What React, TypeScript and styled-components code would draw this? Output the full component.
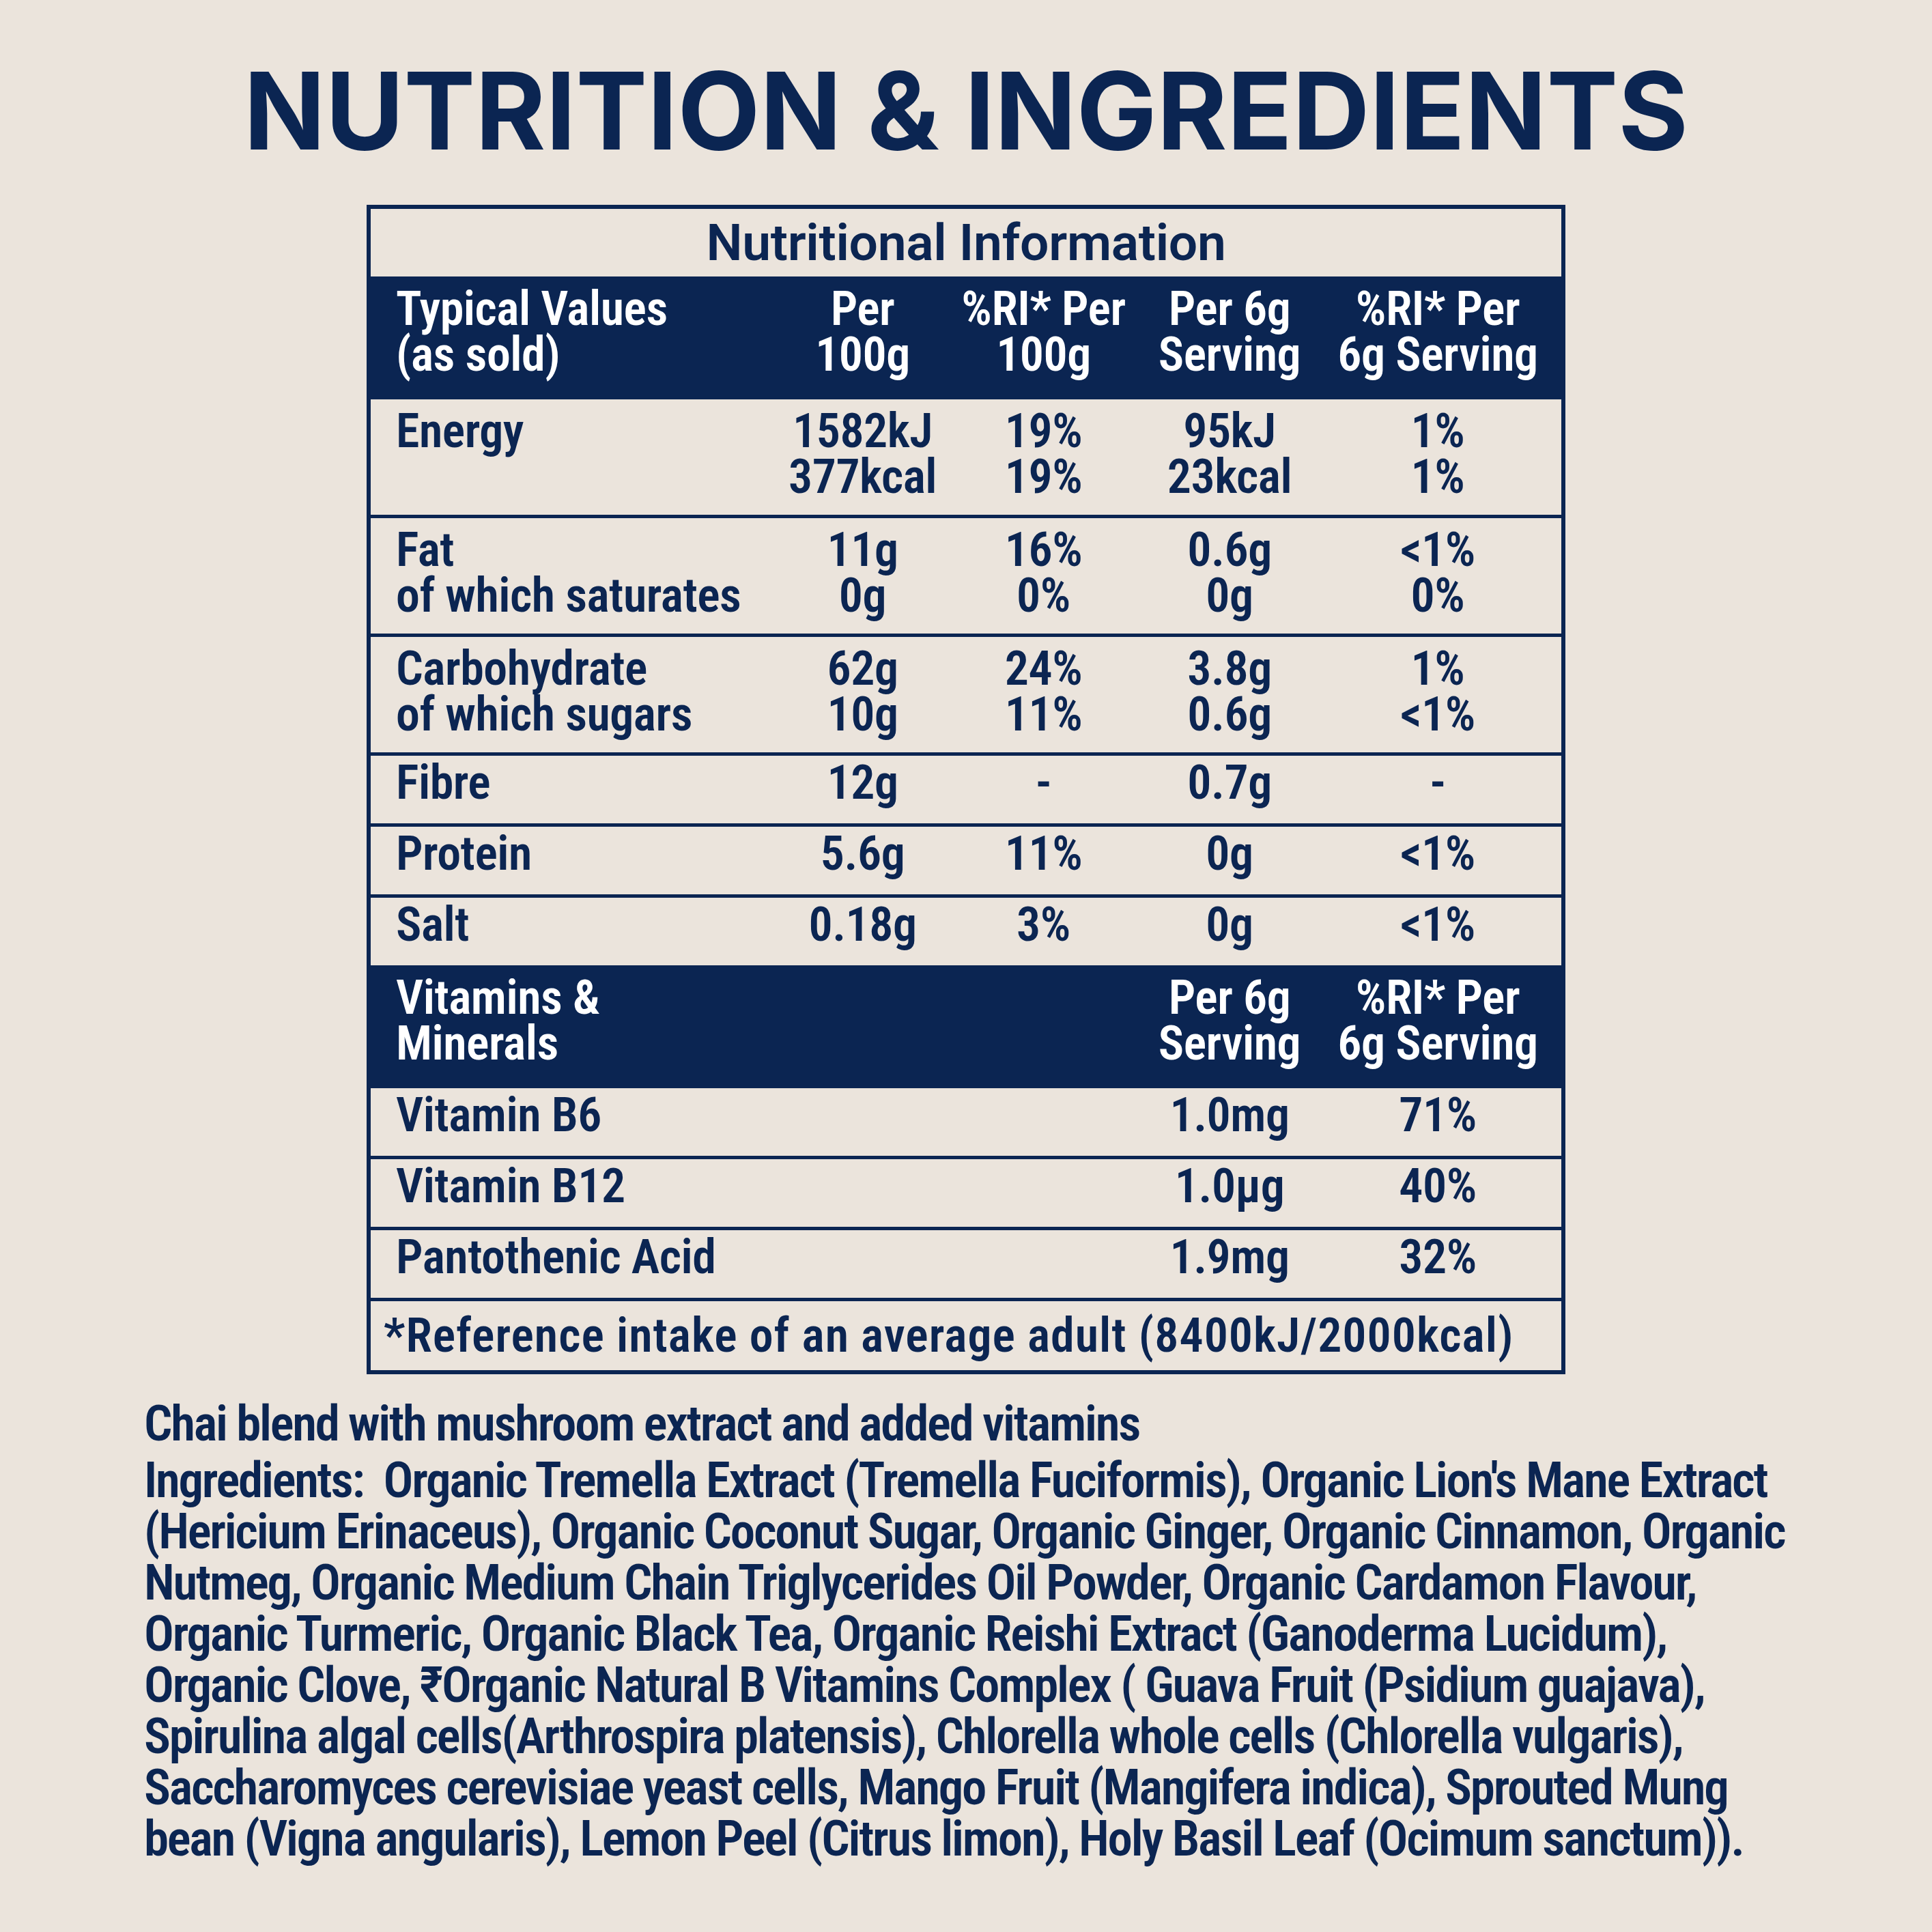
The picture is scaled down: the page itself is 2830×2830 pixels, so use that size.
import React from "react";
import styled, { createGlobalStyle } from "styled-components";

const NAVY = "#0b2552";
const CREAM = "#ebe4dc";

const GlobalStyle = createGlobalStyle`
  html, body {
    margin: 0;
    padding: 0;
    background: ${CREAM};
  }
  body {
    font-family: Roboto, "Noto Sans", "Liberation Sans", sans-serif;
    color: ${NAVY};
  }
  * { box-sizing: border-box; }
`;

const Page = styled.div`
  width: 2830px;
  height: 2830px;
  background: ${CREAM};
  padding-top: 84px;
  display: flex;
  flex-direction: column;
  align-items: stretch;
`;

const Title = styled.h1`
  margin: 0;
  font-family: Inter, Roboto, sans-serif;
  font-size: 157px;
  line-height: 157px;
  font-weight: 700;
  text-align: center;
  color: ${NAVY};
`;

const Table = styled.div`
  width: 1756px;
  margin: 59px auto 0;
  border: 6px solid ${NAVY};
  display: flex;
  flex-direction: column;
`;

const TableTitle = styled.div`
  height: 99px;
  line-height: 99px;
  text-align: center;
  font-size: 75px;
  font-weight: 600;
  letter-spacing: -0.3px;
`;

type Kind = "head" | "single" | "double";

const pads: Record<Kind, string> = {
  head: "14px 16px 32px 0",
  double: "13px 16px 22px 0",
  single: "6px 16px 26px 0",
};

const Row = styled.div<{ $kind: Kind; $rule?: boolean }>`
  display: grid;
  grid-template-columns: 588px 265px 265px 280px 330px;
  padding: ${(p) => pads[p.$kind]};
  background: ${(p) => (p.$kind === "head" ? NAVY : "transparent")};
  color: ${(p) => (p.$kind === "head" ? "#ffffff" : NAVY)};
  border-top: ${(p) => (p.$rule ? `5px solid ${NAVY}` : "none")};
  font-size: 70px;
  line-height: 67px;
  font-weight: 600;
  font-stretch: 75%;
  letter-spacing: -0.5px;
`;

const Label = styled.div`
  padding-left: 37px;
  white-space: nowrap;
`;

const Cell = styled.div`
  text-align: center;
  white-space: nowrap;
`;

const Footnote = styled.div`
  border-top: 5px solid ${NAVY};
  padding: 17px 0 17px 19px;
  font-size: 70px;
  line-height: 67px;
  font-weight: 600;
  font-stretch: 75%;
  letter-spacing: 1px;
  white-space: nowrap;
`;

const Ingredients = styled.div`
  margin-top: 35px;
  padding-left: 211px;
  font-size: 73px;
  line-height: 75px;
  font-weight: 600;
  font-stretch: 75%;
  letter-spacing: -2.3px;
  color: ${NAVY};
`;

const Lead = styled.p`
  margin: 0 0 8px;
  white-space: nowrap;
`;

const Line = styled.div`
  white-space: pre;
`;

type R = { label: string[]; cols: string[][] };

const nutrition: R[] = [
  { label: ["Energy"], cols: [["1582kJ", "377kcal"], ["19%", "19%"], ["95kJ", "23kcal"], ["1%", "1%"]] },
  { label: ["Fat", "of which saturates"], cols: [["11g", "0g"], ["16%", "0%"], ["0.6g", "0g"], ["<1%", "0%"]] },
  { label: ["Carbohydrate", "of which sugars"], cols: [["62g", "10g"], ["24%", "11%"], ["3.8g", "0.6g"], ["1%", "<1%"]] },
  { label: ["Fibre"], cols: [["12g"], ["-"], ["0.7g"], ["-"]] },
  { label: ["Protein"], cols: [["5.6g"], ["11%"], ["0g"], ["<1%"]] },
  { label: ["Salt"], cols: [["0.18g"], ["3%"], ["0g"], ["<1%"]] },
];

const vitamins: R[] = [
  { label: ["Vitamin B6"], cols: [[""], [""], ["1.0mg"], ["71%"]] },
  { label: ["Vitamin B12"], cols: [[""], [""], ["1.0µg"], ["40%"]] },
  { label: ["Pantothenic Acid"], cols: [[""], [""], ["1.9mg"], ["32%"]] },
];

const ingredientLines = [
  "Ingredients:  Organic Tremella Extract (Tremella Fuciformis), Organic Lion's Mane Extract",
  "(Hericium Erinaceus), Organic Coconut Sugar, Organic Ginger, Organic Cinnamon, Organic",
  "Nutmeg, Organic Medium Chain Triglycerides Oil Powder, Organic Cardamon Flavour,",
  "Organic Turmeric, Organic Black Tea, Organic Reishi Extract (Ganoderma Lucidum),",
  "Organic Clove, ₹Organic Natural B Vitamins Complex ( Guava Fruit (Psidium guajava),",
  "Spirulina algal cells(Arthrospira platensis), Chlorella whole cells (Chlorella vulgaris),",
  "Saccharomyces cerevisiae yeast cells, Mango Fruit (Mangifera indica), Sprouted Mung",
  "bean (Vigna angularis), Lemon Peel (Citrus limon), Holy Basil Leaf (Ocimum sanctum)).",
];

const Lines: React.FC<{ items: string[] }> = ({ items }) => (
  <>
    {items.map((t, i) => (
      <React.Fragment key={i}>
        {t}
        {i < items.length - 1 && <br />}
      </React.Fragment>
    ))}
  </>
);

const DataRow: React.FC<{ r: R; rule: boolean }> = ({ r, rule }) => (
  <Row $kind={r.label.length > 1 || r.cols[0].length > 1 ? "double" : "single"} $rule={rule}>
    <Label>
      <Lines items={r.label} />
    </Label>
    {r.cols.map((c, i) => (
      <Cell key={i}>
        <Lines items={c} />
      </Cell>
    ))}
  </Row>
);

export default function App() {
  return (
    <>
      <GlobalStyle />
      <Page>
        <Title>NUTRITION &amp; INGREDIENTS</Title>
        <Table>
          <TableTitle>Nutritional Information</TableTitle>
          <Row $kind="head">
            <Label>
              Typical Values
              <br />
              (as sold)
            </Label>
            <Cell>
              Per
              <br />
              100g
            </Cell>
            <Cell>
              %RI* Per
              <br />
              100g
            </Cell>
            <Cell>
              Per 6g
              <br />
              Serving
            </Cell>
            <Cell>
              %RI* Per
              <br />
              6g Serving
            </Cell>
          </Row>
          {nutrition.map((r, i) => (
            <DataRow key={r.label[0]} r={r} rule={i > 0} />
          ))}
          <Row $kind="head">
            <Label>
              Vitamins &amp;
              <br />
              Minerals
            </Label>
            <Cell />
            <Cell />
            <Cell>
              Per 6g
              <br />
              Serving
            </Cell>
            <Cell>
              %RI* Per
              <br />
              6g Serving
            </Cell>
          </Row>
          {vitamins.map((r, i) => (
            <DataRow key={r.label[0]} r={r} rule={i > 0} />
          ))}
          <Footnote>*Reference intake of an average adult (8400kJ/2000kcal)</Footnote>
        </Table>
        <Ingredients>
          <Lead>Chai blend with mushroom extract and added vitamins</Lead>
          {ingredientLines.map((l) => (
            <Line key={l}>{l}</Line>
          ))}
        </Ingredients>
      </Page>
    </>
  );
}
